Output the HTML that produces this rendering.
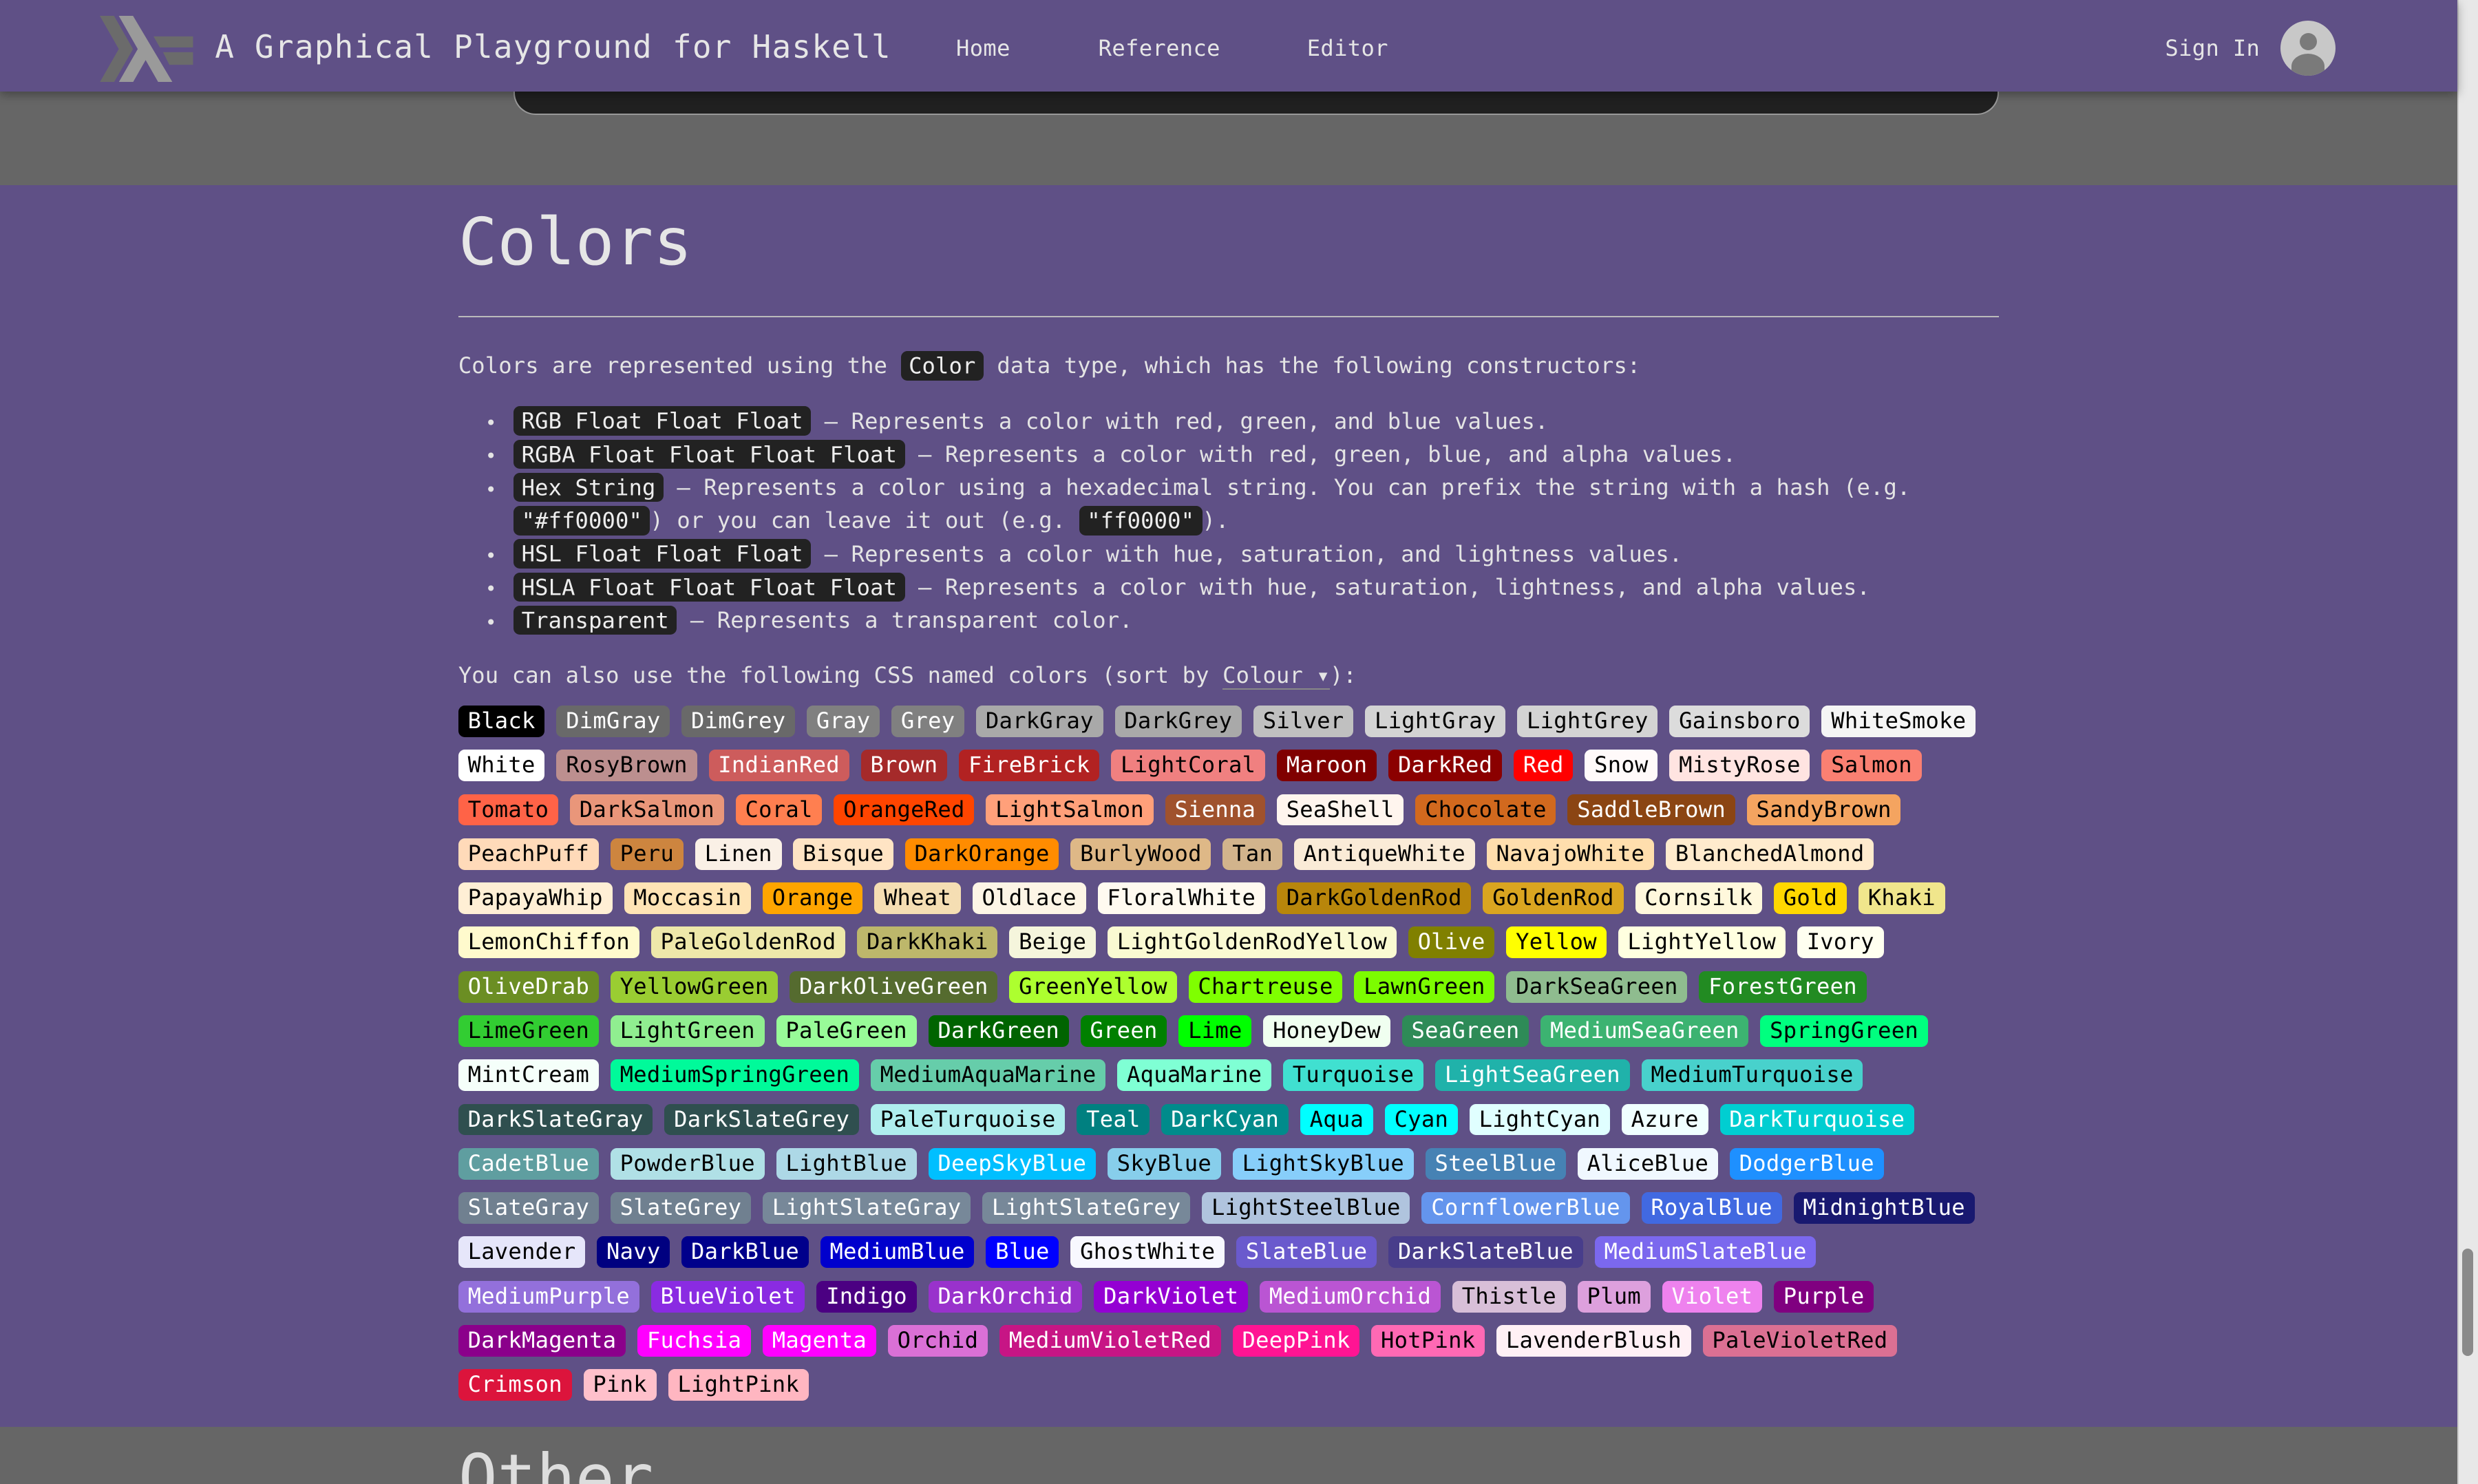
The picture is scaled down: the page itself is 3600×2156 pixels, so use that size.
<!DOCTYPE html>
<html><head><meta charset="utf-8">
<style>
html,body{margin:0;padding:0;background:#5f5086;overflow:hidden}
#z{zoom:2.29592;width:1568px;height:939px;position:relative;overflow:hidden;font-family:"DejaVu Sans Mono","Liberation Mono",monospace;color:#e4e4e4}
.nav{position:absolute;left:0;top:0;width:1555px;height:58px;background:#5f5086;z-index:2;box-shadow:0 2px 6px rgba(0,0,0,.35)}
.gray{position:absolute;left:0;top:58px;width:1555px;height:59px;background:#666}
.codebox{position:absolute;left:325px;top:40px;width:938px;height:32px;background:#202020;border:1px solid #999;border-top:none;border-radius:0 0 14px 14px}
.main{position:absolute;left:0;top:117px;width:1555px;height:786px;background:#5f5086}
.bottom{position:absolute;left:0;top:903px;width:1555px;height:40px;background:#666}
.scroll{position:absolute;left:1555px;top:0;width:13px;height:939px;background:#e8e8e8;border-left:1px solid #ccc}
.thumb{position:absolute;left:1558px;top:790px;width:7px;height:68px;background:#8a8a8a;border-radius:4px}
.title{position:absolute;left:136px;top:18px;font-size:20px;letter-spacing:.55px;color:#e6e6e6}
.link{position:absolute;top:22px;font-size:14px;color:#e6e6e6;letter-spacing:.15px}
.avatar{position:absolute;left:1443px;top:13px;width:35px;height:35px;border-radius:50%;background:#c8c8c8;overflow:hidden}
h1{position:absolute;left:290px;top:130px;margin:0;font-weight:normal;font-size:41px;letter-spacing:0;color:#e6e6e6}
.hr{position:absolute;left:290px;top:200px;width:975px;height:1px;background:#bbb}
.txt{position:absolute;left:290px;font-size:14px;letter-spacing:.06px;line-height:21px;white-space:nowrap}
code{background:#222;color:#eee;border-radius:4px;padding:1px 5px;font-family:inherit}
.bul{position:absolute;left:307px;font-size:12px}
.rows{position:absolute;left:290px;top:446px}
.row{height:28px;white-space:nowrap}
.row span{display:inline-block;height:20px;line-height:20px;padding:0 6px;border-radius:4px;font-size:14px;letter-spacing:.12px;color:#000;margin-right:7.4px}
.other{position:absolute;left:290px;top:912px;font-size:41px;color:#ddd}
</style></head><body><div id="z">
<div class="gray"></div>
<div class="codebox"></div>
<div class="main"></div>
<div class="bottom"></div>
<div class="other">Other</div>
<div class="nav">
<svg style="position:absolute;left:63px;top:10px" width="60" height="42" viewBox="0 0 60 42">
<polygon points="0,0 9,0 21,21 9,42 0,42 12,21" fill="#6b6b6b"/>
<polygon points="12,0 21,0 46,42 37,42 29,28 21,42 12,42 24,21" fill="#9a9a9a"/>
<polygon points="34,13 59,13 59,20 38,20" fill="#6b6b6b"/>
<polygon points="40,23 59,23 59,31 44,31" fill="#6b6b6b"/>
</svg>
<div class="title">A Graphical Playground for Haskell</div>
<div class="link" style="left:605px">Home</div>
<div class="link" style="left:695px">Reference</div>
<div class="link" style="left:827px">Editor</div>
<div class="link" style="left:1370px">Sign In</div>
<div class="avatar"><div style="position:absolute;left:12px;top:8px;width:11px;height:11px;border-radius:50%;background:#7a7a7a"></div><div style="position:absolute;left:7px;top:21px;width:21px;height:16px;border-radius:50% 50% 0 0;background:#7a7a7a"></div></div>
</div>
<div class="scroll"></div><div class="thumb"></div>
<h1>Colors</h1>
<div class="hr"></div>
<div class="txt" style="top:221px">Colors are represented using the <code>Color</code> data type, which has the following constructors:</div>
<div class="bul" style="top:261px">•</div><div class="txt" style="left:325px;top:256px"><code>RGB Float Float Float</code> — Represents a color with red, green, and blue values.</div>
<div class="bul" style="top:282px">•</div><div class="txt" style="left:325px;top:277px"><code>RGBA Float Float Float Float</code> — Represents a color with red, green, blue, and alpha values.</div>
<div class="bul" style="top:303px">•</div><div class="txt" style="left:325px;top:298px"><code>Hex String</code> — Represents a color using a hexadecimal string. You can prefix the string with a hash (e.g.<br><code>"#ff0000"</code>) or you can leave it out (e.g. <code>"ff0000"</code>).</div>
<div class="bul" style="top:345px">•</div><div class="txt" style="left:325px;top:340px"><code>HSL Float Float Float</code> — Represents a color with hue, saturation, and lightness values.</div>
<div class="bul" style="top:366px">•</div><div class="txt" style="left:325px;top:361px"><code>HSLA Float Float Float Float</code> — Represents a color with hue, saturation, lightness, and alpha values.</div>
<div class="bul" style="top:387px">•</div><div class="txt" style="left:325px;top:382px"><code>Transparent</code> — Represents a transparent color.</div>
<div class="txt" style="top:417px">You can also use the following CSS named colors (sort by <span style="border-bottom:1px solid #888">Colour ▾</span>):</div>
<div class="rows" id="rows">
<div class="row"><span>Black</span><span>DimGray</span><span>DimGrey</span><span>Gray</span><span>Grey</span><span>DarkGray</span><span>DarkGrey</span><span>Silver</span><span>LightGray</span><span>LightGrey</span><span>Gainsboro</span><span>WhiteSmoke</span></div>
<div class="row"><span>White</span><span>RosyBrown</span><span>IndianRed</span><span>Brown</span><span>FireBrick</span><span>LightCoral</span><span>Maroon</span><span>DarkRed</span><span>Red</span><span>Snow</span><span>MistyRose</span><span>Salmon</span></div>
<div class="row"><span>Tomato</span><span>DarkSalmon</span><span>Coral</span><span>OrangeRed</span><span>LightSalmon</span><span>Sienna</span><span>SeaShell</span><span>Chocolate</span><span>SaddleBrown</span><span>SandyBrown</span></div>
<div class="row"><span>PeachPuff</span><span>Peru</span><span>Linen</span><span>Bisque</span><span>DarkOrange</span><span>BurlyWood</span><span>Tan</span><span>AntiqueWhite</span><span>NavajoWhite</span><span>BlanchedAlmond</span></div>
<div class="row"><span>PapayaWhip</span><span>Moccasin</span><span>Orange</span><span>Wheat</span><span>Oldlace</span><span>FloralWhite</span><span>DarkGoldenRod</span><span>GoldenRod</span><span>Cornsilk</span><span>Gold</span><span>Khaki</span></div>
<div class="row"><span>LemonChiffon</span><span>PaleGoldenRod</span><span>DarkKhaki</span><span>Beige</span><span>LightGoldenRodYellow</span><span>Olive</span><span>Yellow</span><span>LightYellow</span><span>Ivory</span></div>
<div class="row"><span>OliveDrab</span><span>YellowGreen</span><span>DarkOliveGreen</span><span>GreenYellow</span><span>Chartreuse</span><span>LawnGreen</span><span>DarkSeaGreen</span><span>ForestGreen</span></div>
<div class="row"><span>LimeGreen</span><span>LightGreen</span><span>PaleGreen</span><span>DarkGreen</span><span>Green</span><span>Lime</span><span>HoneyDew</span><span>SeaGreen</span><span>MediumSeaGreen</span><span>SpringGreen</span></div>
<div class="row"><span>MintCream</span><span>MediumSpringGreen</span><span>MediumAquaMarine</span><span>AquaMarine</span><span>Turquoise</span><span>LightSeaGreen</span><span>MediumTurquoise</span></div>
<div class="row"><span>DarkSlateGray</span><span>DarkSlateGrey</span><span>PaleTurquoise</span><span>Teal</span><span>DarkCyan</span><span>Aqua</span><span>Cyan</span><span>LightCyan</span><span>Azure</span><span>DarkTurquoise</span></div>
<div class="row"><span>CadetBlue</span><span>PowderBlue</span><span>LightBlue</span><span>DeepSkyBlue</span><span>SkyBlue</span><span>LightSkyBlue</span><span>SteelBlue</span><span>AliceBlue</span><span>DodgerBlue</span></div>
<div class="row"><span>SlateGray</span><span>SlateGrey</span><span>LightSlateGray</span><span>LightSlateGrey</span><span>LightSteelBlue</span><span>CornflowerBlue</span><span>RoyalBlue</span><span>MidnightBlue</span></div>
<div class="row"><span>Lavender</span><span>Navy</span><span>DarkBlue</span><span>MediumBlue</span><span>Blue</span><span>GhostWhite</span><span>SlateBlue</span><span>DarkSlateBlue</span><span>MediumSlateBlue</span></div>
<div class="row"><span>MediumPurple</span><span>BlueViolet</span><span>Indigo</span><span>DarkOrchid</span><span>DarkViolet</span><span>MediumOrchid</span><span>Thistle</span><span>Plum</span><span>Violet</span><span>Purple</span></div>
<div class="row"><span>DarkMagenta</span><span>Fuchsia</span><span>Magenta</span><span>Orchid</span><span>MediumVioletRed</span><span>DeepPink</span><span>HotPink</span><span>LavenderBlush</span><span>PaleVioletRed</span></div>
<div class="row"><span>Crimson</span><span>Pink</span><span>LightPink</span></div>
</div>
</div>
<script>
var w="Black DimGray DimGrey Gray Grey IndianRed Brown FireBrick Maroon DarkRed Red Sienna SaddleBrown Olive OliveDrab DarkOliveGreen ForestGreen DarkGreen Green SeaGreen MediumSeaGreen LightSeaGreen DarkSlateGray DarkSlateGrey Teal DarkCyan DarkTurquoise CadetBlue DeepSkyBlue SteelBlue DodgerBlue SlateGray SlateGrey LightSlateGray LightSlateGrey CornflowerBlue RoyalBlue MidnightBlue Navy DarkBlue MediumBlue Blue SlateBlue DarkSlateBlue MediumSlateBlue MediumPurple BlueViolet Indigo DarkOrchid DarkViolet MediumOrchid Violet Purple DarkMagenta Fuchsia Magenta MediumVioletRed DeepPink Crimson".split(" ");
document.querySelectorAll('#rows span').forEach(function(s){var n=s.textContent;s.style.background=n;if(w.indexOf(n)>=0)s.style.color='#fff';});
</script>
</body></html>
